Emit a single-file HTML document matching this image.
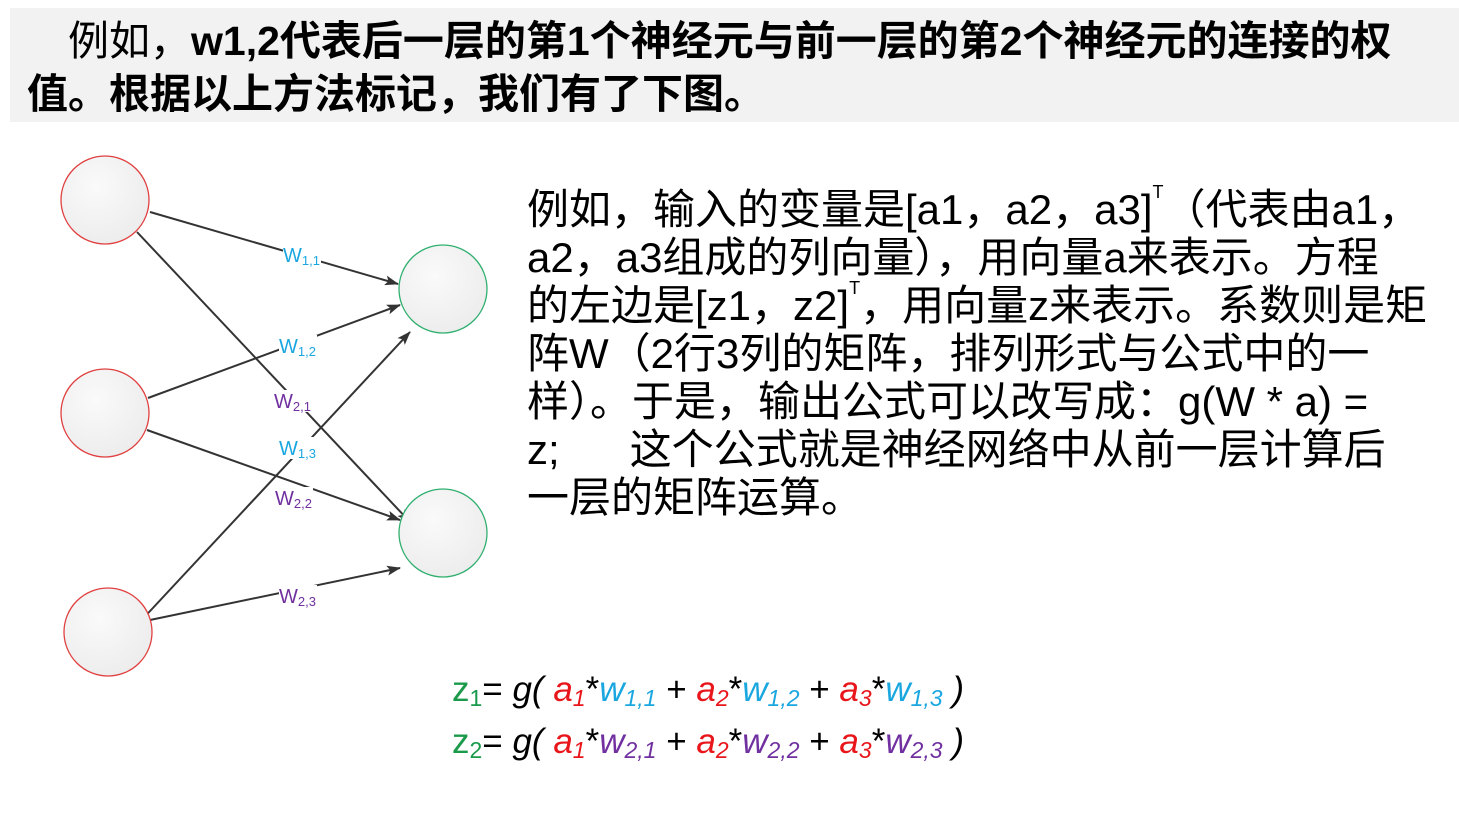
<!DOCTYPE html>
<html><head><meta charset="utf-8"><style>
body{margin:0;width:1459px;height:766px;background:#fff;position:relative;overflow:hidden;font-family:"Liberation Sans","Noto Sans CJK SC",sans-serif;}
.hdr{position:absolute;left:10px;top:8px;width:1449px;height:114px;background:#f2f2f2;}
.hdr div{position:absolute;font-size:41px;font-weight:bold;color:#000;white-space:nowrap;line-height:50px;}
.txt{position:absolute;left:527px;top:186px;font-size:42px;line-height:48px;color:#000;white-space:nowrap;}
.txt sup{font-size:18px;line-height:0;vertical-align:top;position:relative;top:6px}
.f{position:absolute;left:452px;font-size:35px;white-space:nowrap;font-family:"Liberation Sans",sans-serif;line-height:40px}
.g{color:#1a9a4a}.r{color:#e8161b;font-style:italic}.b{color:#1aa7e0;font-style:italic}.p{color:#7030a0;font-style:italic}
sub{font-size:23px;vertical-align:-5px;line-height:0}
</style></head><body>
<div class="hdr">
<div style="left:58px;top:8px"><span style="font-weight:normal">例如，</span>w1,2代表后一层的第1个神经元与前一层的第2个神经元的连接的权</div>
<div style="left:17px;top:61px">值。根据以上方法标记，我们有了下图。</div>
</div>
<svg width="520" height="680" style="position:absolute;left:0;top:140px" viewBox="0 140 520 680">
<defs>
<radialGradient id="gr" cx="0.4" cy="0.35" r="0.7"><stop offset="0" stop-color="#fafafa"/><stop offset="1" stop-color="#ececec"/></radialGradient>
<marker id="ar" markerWidth="14" markerHeight="10" refX="13" refY="5" orient="auto" markerUnits="userSpaceOnUse"><path d="M0,0 L14,5 L0,10 L3,5 Z" fill="#333"/></marker>
</defs>
<g stroke="#333" stroke-width="2" fill="none" marker-end="url(#ar)">
<line x1="150" y1="212" x2="398" y2="284"/>
<line x1="137" y1="232" x2="410" y2="522"/>
<line x1="148" y1="398" x2="400" y2="305"/>
<line x1="147" y1="430" x2="400" y2="520"/>
<line x1="138" y1="624" x2="410" y2="332"/>
<line x1="150" y1="620" x2="400" y2="568"/>
</g>
<g font-size="20" font-family="Liberation Sans,sans-serif">
<rect x="283" y="244" width="38" height="22" fill="#fff"/>
<text x="283" y="262" fill="#1aa7e0">W<tspan font-size="13" dy="3">1,1</tspan></text>
<rect x="279" y="335" width="38" height="22" fill="#fff"/>
<text x="279" y="353" fill="#1aa7e0">W<tspan font-size="13" dy="3">1,2</tspan></text>
<rect x="274" y="390" width="38" height="22" fill="#fff"/>
<text x="274" y="408" fill="#7030a0">W<tspan font-size="13" dy="3">2,1</tspan></text>
<rect x="279" y="437" width="38" height="22" fill="#fff"/>
<text x="279" y="455" fill="#1aa7e0">W<tspan font-size="13" dy="3">1,3</tspan></text>
<rect x="275" y="487" width="38" height="22" fill="#fff"/>
<text x="275" y="505" fill="#7030a0">W<tspan font-size="13" dy="3">2,2</tspan></text>
<rect x="279" y="585" width="38" height="22" fill="#fff"/>
<text x="279" y="603" fill="#7030a0">W<tspan font-size="13" dy="3">2,3</tspan></text>
</g>
<g stroke-width="1.3" fill="url(#gr)">
<circle cx="105" cy="200" r="44" stroke="#e04040"/>
<circle cx="105" cy="413" r="44" stroke="#e04040"/>
<circle cx="108" cy="632" r="44" stroke="#e04040"/>
<circle cx="443" cy="289" r="44" stroke="#30b070"/>
<circle cx="443" cy="533" r="44" stroke="#30b070"/>
</g>
</svg>
<div class="txt">例如，输入的变量是[a1，a2，a3]<sup>T</sup>（代表由a1，<br>a2，a3组成的列向量），用向量a来表示。方程<br>的左边是[z1，z2]<sup>T</sup>，用向量z来表示。系数则是矩<br>阵W（2行3列的矩阵，排列形式与公式中的一<br>样）。于是，输出公式可以改写成：g(W * a) =<br>z;&nbsp;&nbsp;&nbsp;&nbsp;&nbsp;&nbsp;这个公式就是神经网络中从前一层计算后<br>一层的矩阵运算。</div>
<div class="f" style="top:670px"><span class="g">z<sub>1</sub></span>= <i>g(</i> <span class="r">a<sub>1</sub></span>*<span class="b">w<sub>1,1</sub></span> + <span class="r">a<sub>2</sub></span>*<span class="b">w<sub>1,2</sub></span> + <span class="r">a<sub>3</sub></span>*<span class="b">w<sub>1,3</sub></span> <i>)</i></div>
<div class="f" style="top:722px"><span class="g">z<sub>2</sub></span>= <i>g(</i> <span class="r">a<sub>1</sub></span>*<span class="p">w<sub>2,1</sub></span> + <span class="r">a<sub>2</sub></span>*<span class="p">w<sub>2,2</sub></span> + <span class="r">a<sub>3</sub></span>*<span class="p">w<sub>2,3</sub></span> <i>)</i></div>
</body></html>
